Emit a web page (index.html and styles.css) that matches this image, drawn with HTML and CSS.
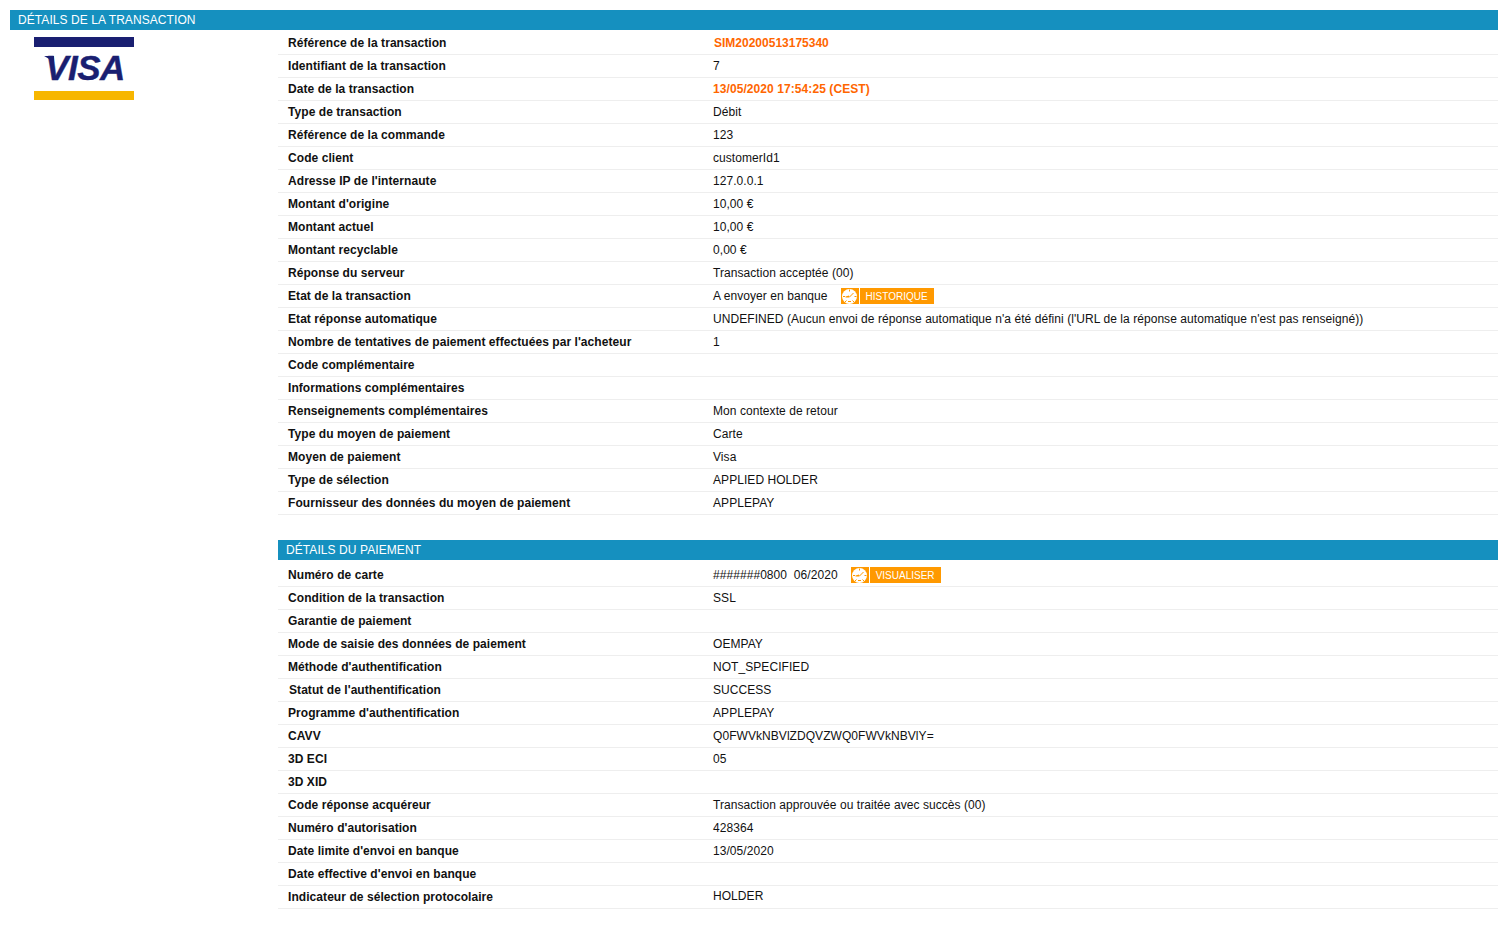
FILE: index.html
```html
<!DOCTYPE html>
<html lang="fr">
<head>
<meta charset="utf-8">
<title>Détails de la transaction</title>
<link rel="stylesheet" href="styles.css">
</head>
<body>
<h2 class="bar">DÉTAILS DE LA TRANSACTION</h2>
<div class="layout">
  <div class="brand">
    <div class="visa">
      <div class="visa-top"></div>
      <div class="visa-mid"><span class="visa-word">VISA</span></div>
      <div class="visa-bottom"></div>
    </div>
  </div>
  <div class="rows">
    <div class="row"><div class="k">Référence de la transaction</div><div class="v hot hot-ref">SIM20200513175340</div></div>
    <div class="row"><div class="k">Identifiant de la transaction</div><div class="v">7</div></div>
    <div class="row"><div class="k">Date de la transaction</div><div class="v hot">13/05/2020 17:54:25 (CEST)</div></div>
    <div class="row"><div class="k">Type de transaction</div><div class="v">Débit</div></div>
    <div class="row"><div class="k">Référence de la commande</div><div class="v">123</div></div>
    <div class="row"><div class="k">Code client</div><div class="v">customerId1</div></div>
    <div class="row"><div class="k">Adresse IP de l'internaute</div><div class="v">127.0.0.1</div></div>
    <div class="row"><div class="k">Montant d'origine</div><div class="v">10,00 €</div></div>
    <div class="row"><div class="k">Montant actuel</div><div class="v">10,00 €</div></div>
    <div class="row"><div class="k">Montant recyclable</div><div class="v">0,00 €</div></div>
    <div class="row"><div class="k">Réponse du serveur</div><div class="v">Transaction acceptée (00)</div></div>
    <div class="row"><div class="k">Etat de la transaction</div><div class="v action">A envoyer en banque
      <a class="btn btn-hist"><svg class="gauge" viewBox="0 0 18 16"><rect width="18" height="16" fill="#ff9900"/><circle cx="8.5" cy="8.5" r="7.5" fill="#fff"/><path d="M8.5 1.5v2M2 8.5h2M13.5 8.5h2M8.5 9 12.5 5M4 14l1.5-1.5M13 14l-1.5-1.5M7 13.5h3" stroke="#ff9900" stroke-width="1" fill="none"/><path d="M8.5 9.5H4.5V8.5L8 7.5z" fill="#ff9900"/></svg><span class="btn-label">HISTORIQUE</span></a></div></div>
    <div class="row"><div class="k">Etat réponse automatique</div><div class="v">UNDEFINED (Aucun envoi de réponse automatique n'a été défini (l'URL de la réponse automatique n'est pas renseigné))</div></div>
    <div class="row"><div class="k">Nombre de tentatives de paiement effectuées par l'acheteur</div><div class="v">1</div></div>
    <div class="row"><div class="k">Code complémentaire</div><div class="v"></div></div>
    <div class="row"><div class="k">Informations complémentaires</div><div class="v"></div></div>
    <div class="row"><div class="k">Renseignements complémentaires</div><div class="v">Mon contexte de retour</div></div>
    <div class="row"><div class="k">Type du moyen de paiement</div><div class="v">Carte</div></div>
    <div class="row"><div class="k">Moyen de paiement</div><div class="v">Visa</div></div>
    <div class="row"><div class="k">Type de sélection</div><div class="v">APPLIED HOLDER</div></div>
    <div class="row"><div class="k">Fournisseur des données du moyen de paiement</div><div class="v">APPLEPAY</div></div>

    <h2 class="bar bar-sub">DÉTAILS DU PAIEMENT</h2>
    <div class="row"><div class="k">Numéro de carte</div><div class="v action">#######0800&nbsp;&nbsp;06/2020
      <a class="btn btn-view"><svg class="gauge" viewBox="0 0 18 16"><rect width="18" height="16" fill="#ff9900"/><circle cx="8.5" cy="8.5" r="7.5" fill="#fff"/><path d="M8.5 1.5v2M2 8.5h2M13.5 8.5h2M8.5 9 12.5 5M4 14l1.5-1.5M13 14l-1.5-1.5M7 13.5h3" stroke="#ff9900" stroke-width="1" fill="none"/><path d="M8.5 9.5H4.5V8.5L8 7.5z" fill="#ff9900"/></svg><span class="btn-label">VISUALISER</span></a></div></div>
    <div class="row"><div class="k">Condition de la transaction</div><div class="v">SSL</div></div>
    <div class="row"><div class="k">Garantie de paiement</div><div class="v"></div></div>
    <div class="row"><div class="k">Mode de saisie des données de paiement</div><div class="v">OEMPAY</div></div>
    <div class="row"><div class="k">Méthode d'authentification</div><div class="v">NOT_SPECIFIED</div></div>
    <div class="row"><div class="k k-inset">Statut de l'authentification</div><div class="v">SUCCESS</div></div>
    <div class="row"><div class="k">Programme d'authentification</div><div class="v">APPLEPAY</div></div>
    <div class="row"><div class="k">CAVV</div><div class="v">Q0FWVkNBVlZDQVZWQ0FWVkNBVlY=</div></div>
    <div class="row"><div class="k">3D ECI</div><div class="v">05</div></div>
    <div class="row"><div class="k">3D XID</div><div class="v"></div></div>
    <div class="row"><div class="k">Code réponse acquéreur</div><div class="v">Transaction approuvée ou traitée avec succès (00)</div></div>
    <div class="row"><div class="k">Numéro d'autorisation</div><div class="v">428364</div></div>
    <div class="row"><div class="k">Date limite d'envoi en banque</div><div class="v">13/05/2020</div></div>
    <div class="row"><div class="k">Date effective d'envoi en banque</div><div class="v"></div></div>
    <div class="row"><div class="k">Indicateur de sélection protocolaire</div><div class="v v-raised">HOLDER</div></div>
  </div>
</div>
</body>
</html>
```
FILE: styles.css
```css
html, body { margin: 0; padding: 0; background: #fff; }
body {
  padding: 10px 7px 0 10px;
  font-family: "Liberation Sans", Arial, sans-serif;
  font-size: 12px;
  color: #111;
}
.bar {
  margin: 0;
  height: 20px;
  line-height: 20px;
  padding-left: 8px;
  background: #1590bf;
  color: #fff;
  font-size: 12px;
  font-weight: normal;
  letter-spacing: 0.08px;
}
.bar-sub { margin: 25px 0 4px; }
.layout { display: flex; padding-top: 2px; }
.brand { width: 268px; flex: none; padding: 5px 0 0 24px; box-sizing: border-box; }
.visa { width: 100px; }
.visa-top { height: 10px; background: #1a1f71; }
.visa-mid { height: 44px; display: flex; align-items: flex-start; justify-content: center; }
.visa-word {
  position: relative;
  left: 1px;
  font-size: 35px;
  font-weight: bold;
  font-style: italic;
  color: #1a1f71;
  line-height: 42px;
  letter-spacing: -0.5px;
  -webkit-text-stroke: 0.4px #1a1f71;
}
.visa-word::before {
  content: "";
  position: absolute;
  left: -1px;
  top: 9px;
  width: 10px;
  height: 6px;
  background: #1a1f71;
  clip-path: polygon(0 0, 100% 0, 100% 100%);
}
.visa-bottom { height: 9px; background: #f7b600; }
.rows { flex: 1; min-width: 0; }
.row {
  display: grid;
  grid-template-columns: 425px 1fr;
  height: 23px;
  box-sizing: border-box;
  border-bottom: 1px solid #eee;
  line-height: 22px;
}
.k { padding-left: 10px; font-weight: bold; letter-spacing: 0.065px; white-space: nowrap; }
.k-inset { padding-left: 11px; }
.v { padding-left: 10px; letter-spacing: 0.06px; white-space: nowrap; }
.v-raised { line-height: 20px; }
.hot { color: #ff6600; font-weight: bold; letter-spacing: 0.08px; }
.hot-ref { padding-left: 11px; letter-spacing: 0; }
.action { display: flex; align-items: center; }
.btn { display: flex; height: 16px; gap: 1px; margin-left: 13px; }
.gauge { width: 18px; height: 16px; display: block; }
.btn-label {
  background: #ff9900;
  color: #fff;
  font-size: 10px;
  line-height: 17px;
  letter-spacing: 0;
  padding: 0 6px 0 6px;
}
```
